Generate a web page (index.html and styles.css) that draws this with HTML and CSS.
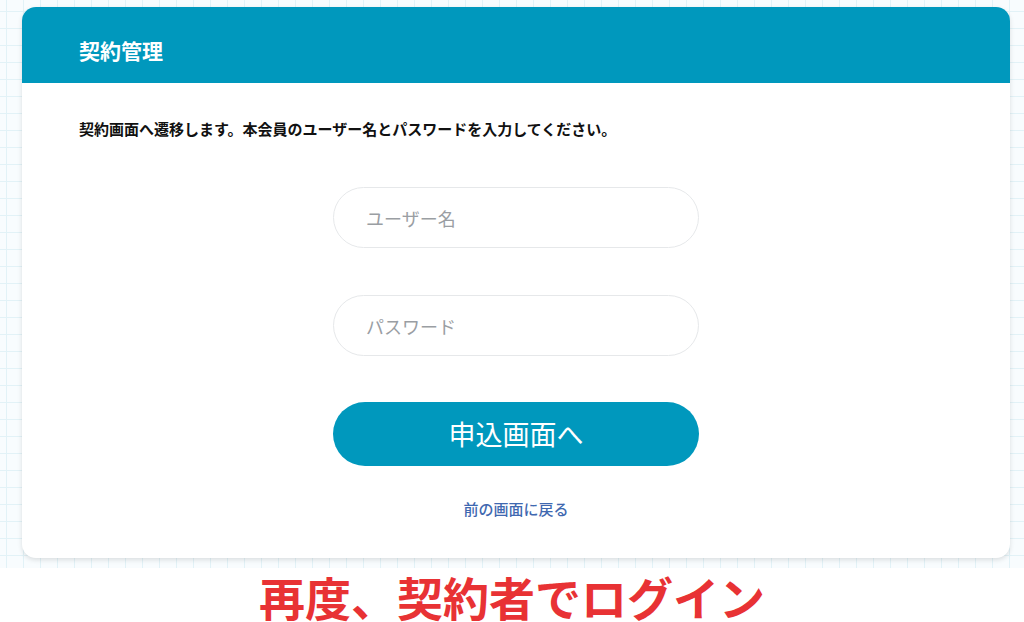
FILE: index.html
```html
<!DOCTYPE html>
<html lang="ja">
<head>
<meta charset="utf-8">
<link rel="stylesheet" href="styles.css">
</head>
<body>
<div class="stage">
  <div class="card">
    <div class="card-header">契約管理</div>
    <div class="card-body">
      <p class="desc">契約画面へ遷移します。本会員のユーザー名とパスワードを入力してください。</p>
      <form class="form">
        <input class="field" type="text" placeholder="ユーザー名">
        <input class="field" type="password" placeholder="パスワード">
        <button class="submit" type="button">申込画面へ</button>
        <a class="back" href="#">前の画面に戻る</a>
      </form>
    </div>
  </div>
</div>
<div class="caption">再度、契約者でログイン</div>
</body>
</html>
```

FILE: styles.css
```css
* { box-sizing: border-box; }
html, body { margin: 0; padding: 0; background: #fff; }
body {
  font-family: "Noto Sans CJK JP", "Noto Sans", sans-serif;
  width: 1024px;
  height: 622px;
  overflow: hidden;
}
.stage {
  height: 568px;
  padding: 7px 14px 0 22px;
  background-color: #f8fcfe;
  background-image:
    linear-gradient(to right, #e2f2f7 1px, transparent 1px),
    linear-gradient(to bottom, #e2f2f7 1px, transparent 1px);
  background-size: 17px 17px;
  background-position: 6px 11px;
}
.card {
  width: 988px;
  height: 551px;
  background: #fff;
  border-radius: 14px;
  overflow: hidden;
  box-shadow: 0 2px 5px rgba(0, 0, 0, 0.12);
  display: flex;
  flex-direction: column;
}
.card-header {
  height: 76px;
  background: #0098bd;
  color: #fff;
  font-size: 21px;
  font-weight: 700;
  display: flex;
  align-items: center;
  padding-left: 57px;
  padding-top: 9px;
}
.card-body {
  padding: 36px 57px 0;
}
.desc {
  margin: 0;
  font-size: 15px;
  line-height: 20px;
  font-weight: 700;
  color: #111;
}
.form {
  margin-top: 48px;
  display: flex;
  flex-direction: column;
  align-items: center;
}
.field {
  width: 366px;
  height: 61px;
  border: 1px solid #e6e8ea;
  border-radius: 31px;
  padding: 0 32px;
  font-family: inherit;
  font-size: 18px;
  color: #333;
  background: #fff;
  outline: none;
  margin-bottom: 47px;
}
.field::placeholder { color: #9a9ea3; }
.field + .field { margin-bottom: 46px; }
.submit {
  width: 366px;
  height: 64px;
  border: none;
  border-radius: 32px;
  background: #0098bd;
  color: #fff;
  font-family: inherit;
  font-size: 27px;
  font-weight: 400;
  padding: 0 0 2px;
}
.back {
  margin-top: 33px;
  font-size: 15px;
  line-height: 20px;
  color: #3f68b0;
  text-decoration: none;
  font-weight: 500;
}
.caption {
  margin-top: 4px;
  text-align: center;
  font-size: 46px;
  line-height: 48px;
  font-weight: 700;
  color: #e83234;
}
```
